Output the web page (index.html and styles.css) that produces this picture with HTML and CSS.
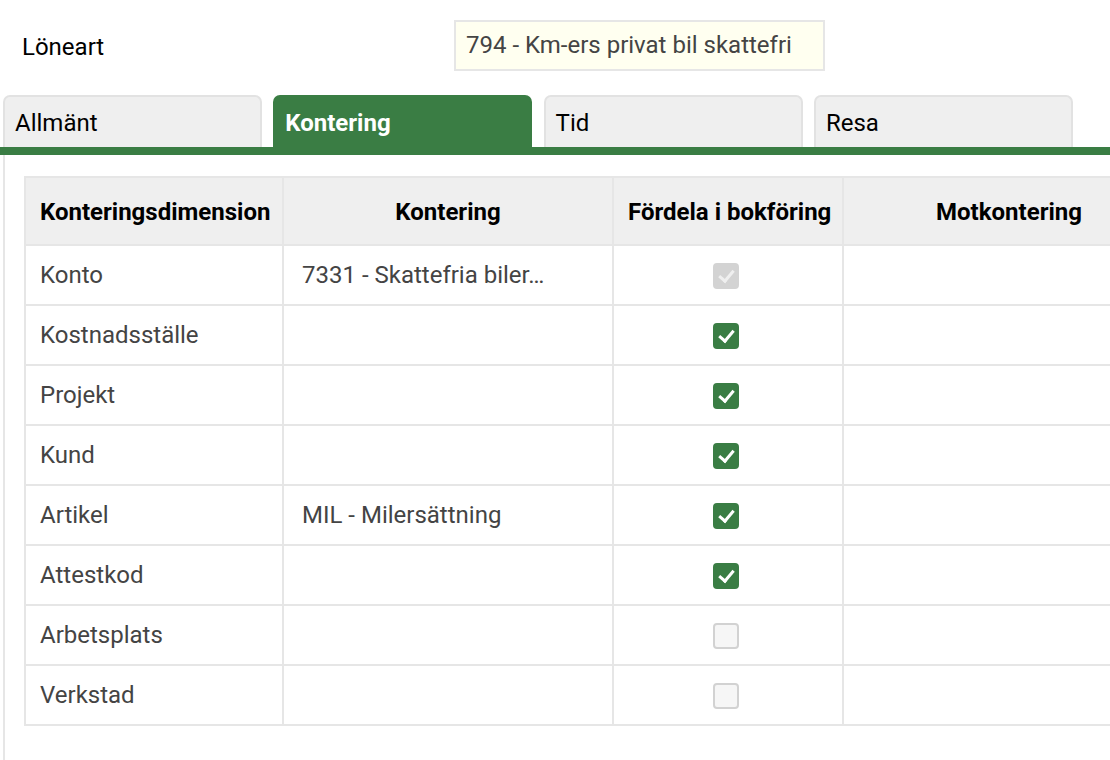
FILE: index.html
```
<!DOCTYPE html>
<html lang="sv">
<head>
    <meta charset="UTF-8">
    <meta name="viewport" content="width=device-width, initial-scale=1.0">
    <title>Löneart</title>
    <link rel="stylesheet" href="styles.css">
</head>
<body>

    <div class="header-row">
        <label class="field-label" for="loneart">Löneart</label>
        <div class="field-value" id="loneart">794 - Km-ers privat bil skattefri</div>
    </div>

    <div class="tabs">
        <div class="tab">Allmänt</div>
        <div class="tab active">Kontering</div>
        <div class="tab">Tid</div>
        <div class="tab">Resa</div>
    </div>

    <div class="tab-panel">
        <table class="kontering-table">
            <colgroup>
                <col class="col-dim">
                <col class="col-kont">
                <col class="col-fordela">
                <col class="col-mot">
            </colgroup>
            <thead>
                <tr>
                    <th class="left">Konteringsdimension</th>
                    <th>Kontering</th>
                    <th>Fördela i bokföring</th>
                    <th>Motkontering</th>
                </tr>
            </thead>
            <tbody>
                <tr>
                    <td>Konto</td>
                    <td title="7331 - Skattefria bilersättningar">7331 - Skattefria biler…</td>
                    <td class="center"><span class="check checked disabled"></span></td>
                    <td></td>
                </tr>
                <tr>
                    <td>Kostnadsställe</td>
                    <td></td>
                    <td class="center"><span class="check checked"></span></td>
                    <td></td>
                </tr>
                <tr>
                    <td>Projekt</td>
                    <td></td>
                    <td class="center"><span class="check checked"></span></td>
                    <td></td>
                </tr>
                <tr>
                    <td>Kund</td>
                    <td></td>
                    <td class="center"><span class="check checked"></span></td>
                    <td></td>
                </tr>
                <tr>
                    <td>Artikel</td>
                    <td>MIL - Milersättning</td>
                    <td class="center"><span class="check checked"></span></td>
                    <td></td>
                </tr>
                <tr>
                    <td>Attestkod</td>
                    <td></td>
                    <td class="center"><span class="check checked"></span></td>
                    <td></td>
                </tr>
                <tr>
                    <td>Arbetsplats</td>
                    <td></td>
                    <td class="center"><span class="check"></span></td>
                    <td></td>
                </tr>
                <tr>
                    <td>Verkstad</td>
                    <td></td>
                    <td class="center"><span class="check"></span></td>
                    <td></td>
                </tr>
            </tbody>
        </table>
    </div>

</body>
</html>
```

FILE: styles.css
```
body {
    margin: 0;
    height: 100vh;
    overflow: hidden;
    background: #fff;
    font-family: Roboto, "Liberation Sans", sans-serif;
    color: #000;
}

.header-row {
    display: grid;
    grid-template-columns: 454px 371px;
    align-items: center;
    padding: 20px 0 24px;
}

.field-label {
    padding-left: 22px;
    font-size: 24px;
    margin-top: 2px;
}

.field-value {
    box-sizing: border-box;
    height: 51px;
    line-height: 47px;
    padding: 0 10px;
    border: 2px solid #e6e6e6;
    background: #fffff0;
    color: #444;
    font-size: 24px;
    white-space: nowrap;
}

.tabs {
    display: flex;
    gap: 11.3px;
    padding-left: 3px;
    border-bottom: 8px solid #3a7d44;
}

.tab {
    box-sizing: border-box;
    width: 259px;
    height: 52px;
    line-height: 52px;
    padding-left: 10px;
    border: 2px solid #e2e2e2;
    border-bottom: none;
    border-radius: 7px 7px 0 0;
    background: #efefef;
    font-size: 24px;
}

.tab.active {
    background: #3a7d44;
    border-color: #3a7d44;
    color: #fff;
    font-weight: bold;
}

.tab-panel {
    margin-left: 3px;
    border-left: 2px solid #e6e6e6;
    padding: 21px 0 0 19px;
    height: 600px;
    overflow: hidden;
}

.kontering-table {
    table-layout: fixed;
    width: 1150px;
    border-collapse: collapse;
    font-size: 24px;
}

.col-dim { width: 258px; }
.col-kont { width: 330px; }
.col-fordela { width: 230px; }
.col-mot { width: 332px; }

.kontering-table th,
.kontering-table td {
    border: 2px solid #e6e6e6;
    padding: 0 14px;
    height: 58px;
    white-space: nowrap;
    overflow: hidden;
}

.kontering-table th {
    height: 64px;
    background: #efefef;
    font-weight: bold;
    text-align: center;
    color: #000;
    padding-top: 2px;
}

.kontering-table th.left {
    text-align: left;
}

.kontering-table td {
    color: #444;
}

.kontering-table td:nth-child(2) {
    padding-left: 18px;
}

.kontering-table td.center {
    text-align: center;
    padding: 0 4px 0 0;
}

/* checkbox look-alike, tick drawn with borders */
.check {
    position: relative;
    display: inline-block;
    box-sizing: border-box;
    width: 26px;
    height: 26px;
    border: 2px solid #d2d2d2;
    border-radius: 4px;
    background: #f6f6f6;
    vertical-align: middle;
}

.check.checked {
    border-color: #3a7d44;
    background: #3a7d44;
}

.check.checked.disabled {
    border-color: #d3d3d3;
    background: #d3d3d3;
}

.check.checked::after {
    content: "";
    position: absolute;
    left: 7px;
    top: 2px;
    width: 6px;
    height: 12px;
    border: solid #fff;
    border-width: 0 3px 3px 0;
    transform: rotate(40deg);
}

.check.checked.disabled::after {
    border-color: #efefef;
}
```
